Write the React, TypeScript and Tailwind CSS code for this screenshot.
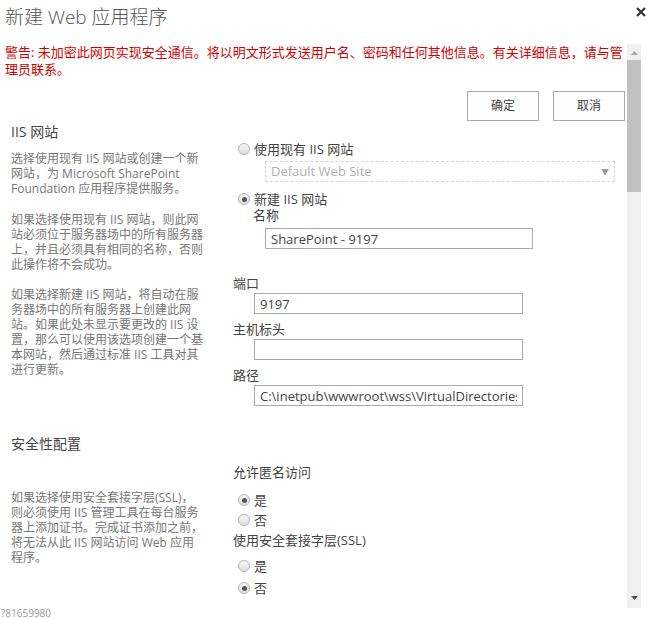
import React from "react";

const Radio = ({ checked, label }: { checked?: boolean; label: string }) => (
    <div className="flex items-center h-[16px] leading-[16px] text-[13px] text-[#444]">
        <span className="relative w-[12px] h-[12px] rounded-full border border-[#b4b4b4] bg-gradient-to-b from-[#f6f6f6] to-[#dedede] flex items-center justify-center">
            {checked && <span className="w-[5px] h-[5px] rounded-full bg-[#555]" />}
        </span>
        <span className="ml-[4px]">{label}</span>
    </div>
);

const Field = ({ value, width }: { value: string; width: string }) => (
    <input
        readOnly
        value={value}
        className={`${width} h-[21px] border border-[#ababab] bg-white px-[5px] text-[13px] text-[#444] outline-none`}
    />
);

const App = () => {
    return (
        <div className="w-[652px] h-[619px] bg-white overflow-hidden font-['Open_Sans','Noto_Sans_CJK_SC',sans-serif]">
            <div className="flex items-start justify-between h-[44px]">
                <h1 className="pl-[5px] pt-[3px] text-[19px] leading-[28px] text-[#555] font-light">新建 Web 应用程序</h1>
                <button className="mr-[6px] mt-[7px]">
                    <svg width="10" height="10" viewBox="0 0 10 10">
                        <path d="M1 1 L9 9 M9 1 L1 9" stroke="#333" strokeWidth="2.2" />
                    </svg>
                </button>
            </div>

            <div className="flex h-[564px]">
                <div className="w-[627px] overflow-hidden">
                    <p className="pl-[5px] pr-[2px] text-[13px] leading-[17px] text-[#d40000]">
                        警告: 未加密此网页实现安全通信。将以明文形式发送用户名、密码和任何其他信息。有关详细信息，请与管理员联系。
                    </p>

                    <div className="flex justify-end gap-[14px] mt-[13px] pr-[2px]">
                        <button className="w-[72px] h-[30px] border border-[#ababab] bg-[#fdfdfd] text-[12px] text-[#444]">确定</button>
                        <button className="w-[72px] h-[30px] border border-[#ababab] bg-[#fdfdfd] text-[12px] text-[#444]">取消</button>
                    </div>

                    {/* IIS 网站 */}
                    <div className="flex">
                        <div className="w-[233px] pl-[11px]">
                            <h2 className="text-[14px] leading-[20px] text-[#444] pt-[1px]">IIS 网站</h2>
                            <div className="w-[198px] mt-[9px] text-[12px] leading-[15px] text-[#777]">
                                <p>选择使用现有 IIS 网站或创建一个新网站，为 Microsoft SharePoint Foundation 应用程序提供服务。</p>
                                <p className="mt-[16px]">如果选择使用现有 IIS 网站，则此网站必须位于服务器场中的所有服务器上，并且必须具有相同的名称，否则此操作将不会成功。</p>
                                <p className="mt-[15px]">如果选择新建 IIS 网站，将自动在服务器场中的所有服务器上创建此网站。如果此处未显示要更改的 IIS 设置，那么可以使用该选项创建一个基本网站，然后通过标准 IIS 工具对其进行更新。</p>
                            </div>
                        </div>
                        <div className="flex-1 text-[13px] text-[#444]">
                            <div className="mt-[20px] ml-[5px]">
                                <Radio label="使用现有 IIS 网站" />
                            </div>
                            <div className="mt-[4px] ml-[32px] w-[350px] h-[21px] border border-dashed border-[#d6d6d6] flex items-center justify-between px-[5px]">
                                <span className="text-[13px] text-[#b0b0b0]">Default Web Site</span>
                                <span className="text-[8px] text-[#999]">▼</span>
                            </div>
                            <div className="mt-[9px] ml-[5px]">
                                <Radio checked label="新建 IIS 网站" />
                            </div>
                            <div className="ml-[20px] leading-[16px]">名称</div>
                            <div className="mt-[5px] ml-[32px]">
                                <Field value="SharePoint - 9197" width="w-[268px]" />
                            </div>
                            <div className="mt-[26px] leading-[16px]">端口</div>
                            <div className="mt-[2px] ml-[21px]">
                                <Field value="9197" width="w-[269px]" />
                            </div>
                            <div className="mt-[7px] leading-[16px]">主机标头</div>
                            <div className="mt-[2px] ml-[21px]">
                                <Field value="" width="w-[269px]" />
                            </div>
                            <div className="mt-[7px] leading-[16px]">路径</div>
                            <div className="mt-[2px] ml-[21px]">
                                <Field value="C:\inetpub\wwwroot\wss\VirtualDirectories\9197" width="w-[269px]" />
                            </div>
                        </div>
                    </div>

                    {/* 安全性配置 */}
                    <div className="flex mt-[28px]">
                        <div className="w-[233px] pl-[11px]">
                            <h2 className="text-[14px] leading-[20px] text-[#444]">安全性配置</h2>
                            <p className="w-[198px] mt-[36px] text-[12px] leading-[15px] text-[#777]">
                                如果选择使用安全套接字层(SSL)，<br />
                                则必须使用 IIS 管理工具在每台服务<br />
                                器上添加证书。完成证书添加之前，<br />
                                将无法从此 IIS 网站访问 Web 应用<br />
                                程序。
                            </p>
                        </div>
                        <div className="flex-1 text-[13px] text-[#444]">
                            <div className="mt-[30px] leading-[16px]">允许匿名访问</div>
                            <div className="mt-[12px] ml-[5px] flex flex-col gap-[4px]">
                                <Radio checked label="是" />
                                <Radio label="否" />
                            </div>
                            <div className="mt-[4px] leading-[16px]">使用安全套接字层(SSL)</div>
                            <div className="mt-[10px] ml-[5px] flex flex-col gap-[6px]">
                                <Radio label="是" />
                                <Radio checked label="否" />
                            </div>
                        </div>
                    </div>
                </div>

                <div className="w-[14px] bg-[#f0f0f0] flex flex-col items-center">
                    <svg width="7" height="4" viewBox="0 0 7 4" className="mt-[7px]">
                        <path d="M0 4 L3.5 0 L7 4 Z" fill="#a6a6a6" />
                    </svg>
                    <div className="w-[14px] h-[132px] bg-[#c1c1c1] mt-[5px]" />
                    <div className="flex-1" />
                    <svg width="7" height="4" viewBox="0 0 7 4" className="mb-[8px]">
                        <path d="M0 0 L7 0 L3.5 4 Z" fill="#505050" />
                    </svg>
                </div>
            </div>

            <div className="pl-[1px] text-[10px] leading-[11px] text-[#999]">?81659980</div>
        </div>
    );
};

export default App;
